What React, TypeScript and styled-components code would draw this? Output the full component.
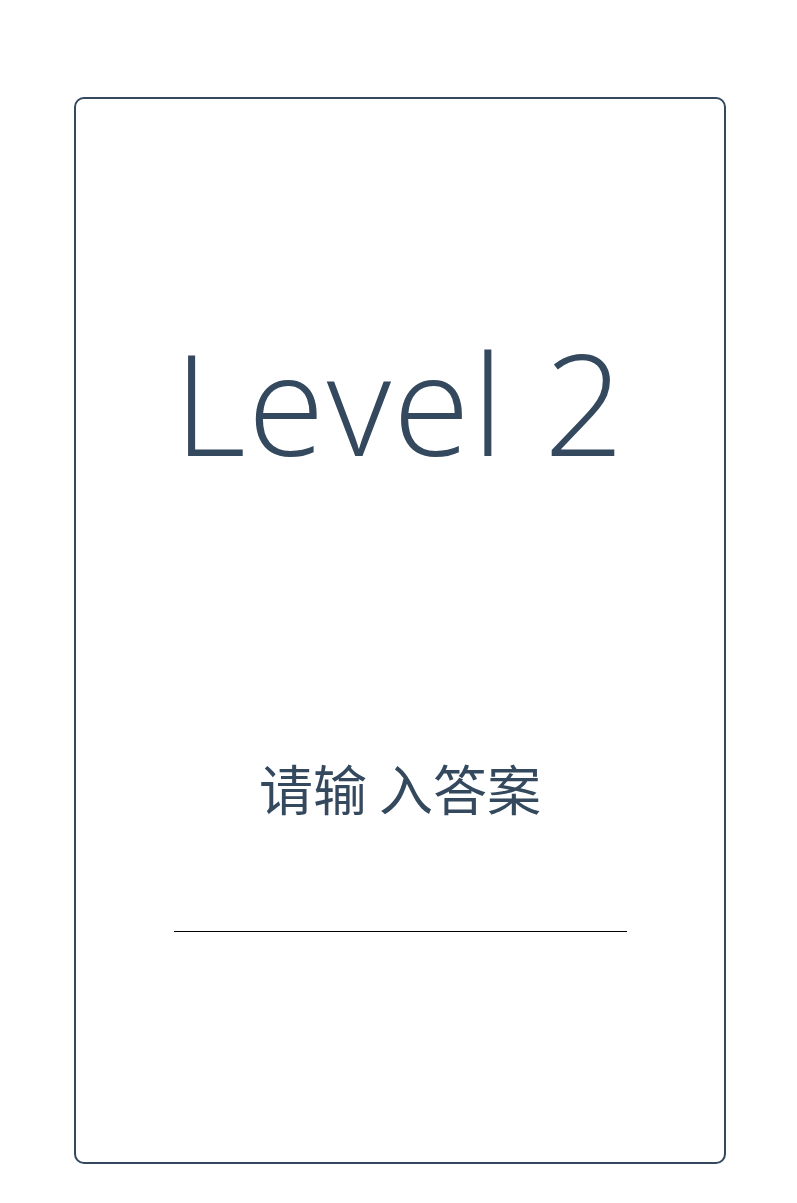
import React from "react";
import styled, { createGlobalStyle } from "styled-components";

const Global = createGlobalStyle`
  html, body { margin: 0; padding: 0; background: #ffffff; }
  body { font-family: "Open Sans", "Noto Sans CJK SC", sans-serif; }
`;

const Page = styled.div`
  display: flex;
  justify-content: flex-start;
  padding: 97px 0 39px 74px;
`;

const Card = styled.div`
  box-sizing: border-box;
  width: 652px;
  height: 1067px;
  border: 2px solid #34495e;
  border-radius: 10px;
  display: flex;
  flex-direction: column;
  align-items: center;
  color: #34495e;
`;

const Title = styled.h1`
  margin: 233px 0 0;
  font-family: "Open Sans", sans-serif;
  font-weight: 300;
  font-size: 140px;
  line-height: 140px;
  letter-spacing: 2px;
`;

const Prompt = styled.div`
  margin-top: 286px;
  font-family: "Noto Sans CJK SC", sans-serif;
  font-size: 54px;
  line-height: 60px;
`;

const Answer = styled.input`
  margin-top: 83px;
  width: 453px;
  height: 30px;
  border: none;
  border-bottom: 1px solid #000;
  outline: none;
  background: transparent;
  padding: 0;
  font-size: 24px;
  text-align: center;
  color: #34495e;
`;

export default function App() {
  return (
    <>
      <Global />
      <Page>
        <Card>
          <Title>Level 2</Title>
          <Prompt>请输 入答案</Prompt>
          <Answer type="text" />
        </Card>
      </Page>
    </>
  );
}
